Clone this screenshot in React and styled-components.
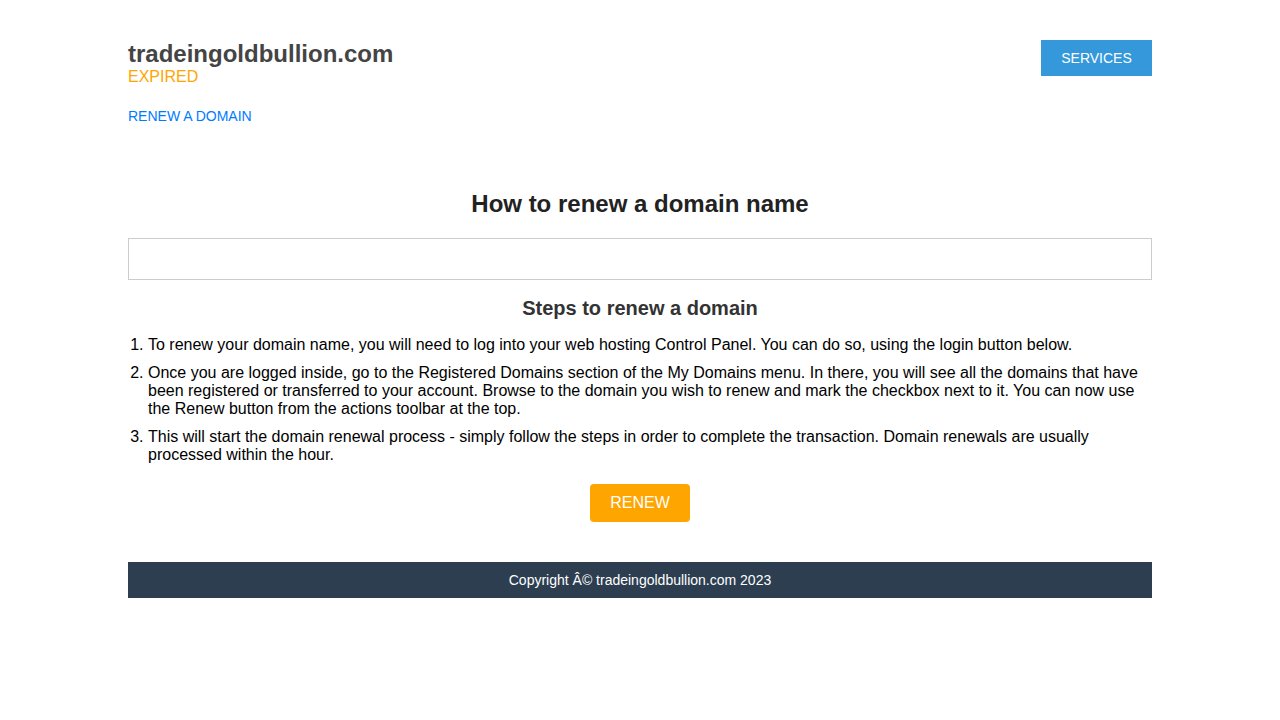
import styled, { createGlobalStyle } from 'styled-components';

const Global = createGlobalStyle`
  html, body { margin: 0; padding: 0; background: #fff; }
  body { font-family: 'Liberation Sans', Arial, sans-serif; }
`;

const Page = styled.div`
  width: 1024px;
  margin: 0 auto;
  padding-top: 40px;
`;

const Header = styled.div`
  display: flex;
  justify-content: space-between;
  align-items: flex-start;
`;

const Brand = styled.div`
  display: flex;
  flex-direction: column;
`;

const Domain = styled.h1`
  margin: 0;
  font-size: 24px;
  line-height: 28px;
  font-weight: 700;
  color: #444;
`;

const Status = styled.div`
  font-size: 16px;
  line-height: 18px;
  color: #ffa500;
`;

const TopLink = styled.a`
  margin-top: 22px;
  font-size: 14px;
  line-height: 16px;
  color: #007bff;
  text-decoration: none;
`;

const ServicesBtn = styled.button`
  width: 111px;
  height: 36px;
  border: none;
  background: #3498db;
  color: #fff;
  font-family: inherit;
  font-size: 14px;
  padding: 0;
`;

const Main = styled.div`
  margin-top: 66px;
  display: flex;
  flex-direction: column;
`;

const Title = styled.h2`
  margin: 0;
  text-align: center;
  font-size: 24px;
  line-height: 28px;
  font-weight: 700;
  color: #222;
`;

const EmptyBox = styled.div`
  margin-top: 20px;
  height: 40px;
  border: 1px solid #ccc;
`;

const Subtitle = styled.h3`
  margin: 16px 0 0;
  text-align: center;
  font-size: 20px;
  line-height: 24px;
  font-weight: 700;
  color: #333;
`;

const Steps = styled.ol`
  margin: 16px 0 0;
  padding-left: 20px;
  font-size: 16px;
  line-height: 18px;
  color: #000;
`;

const Step = styled.li`
  margin-bottom: 10px;
`;

const Center = styled.div`
  display: flex;
  justify-content: center;
  margin-top: 10px;
`;

const RenewBtn = styled.button`
  width: 100px;
  height: 38px;
  border: none;
  border-radius: 4px;
  background: #ffa500;
  color: #fff;
  font-family: inherit;
  font-size: 16px;
  padding: 0;
`;

const Footer = styled.div`
  margin-top: 40px;
  height: 36px;
  background: #2c3e50;
  color: #fff;
  font-size: 14px;
  display: flex;
  align-items: center;
  justify-content: center;
`;

export default function App() {
  return (
    <>
      <Global />
      <Page>
        <Header>
          <Brand>
            <Domain>tradeingoldbullion.com</Domain>
            <Status>EXPIRED</Status>
            <TopLink href="#">RENEW A DOMAIN</TopLink>
          </Brand>
          <ServicesBtn>SERVICES</ServicesBtn>
        </Header>
        <Main>
          <Title>How to renew a domain name</Title>
          <EmptyBox />
          <Subtitle>Steps to renew a domain</Subtitle>
          <Steps>
            <Step>To renew your domain name, you will need to log into your web hosting Control Panel. You can do so, using the login button below.</Step>
            <Step>Once you are logged inside, go to the Registered Domains section of the My Domains menu. In there, you will see all the domains that have been registered or transferred to your account. Browse to the domain you wish to renew and mark the checkbox next to it. You can now use the Renew button from the actions toolbar at the top.</Step>
            <Step>This will start the domain renewal process - simply follow the steps in order to complete the transaction. Domain renewals are usually processed within the hour.</Step>
          </Steps>
          <Center>
            <RenewBtn>RENEW</RenewBtn>
          </Center>
        </Main>
        <Footer>Copyright Â© tradeingoldbullion.com 2023</Footer>
      </Page>
    </>
  );
}
